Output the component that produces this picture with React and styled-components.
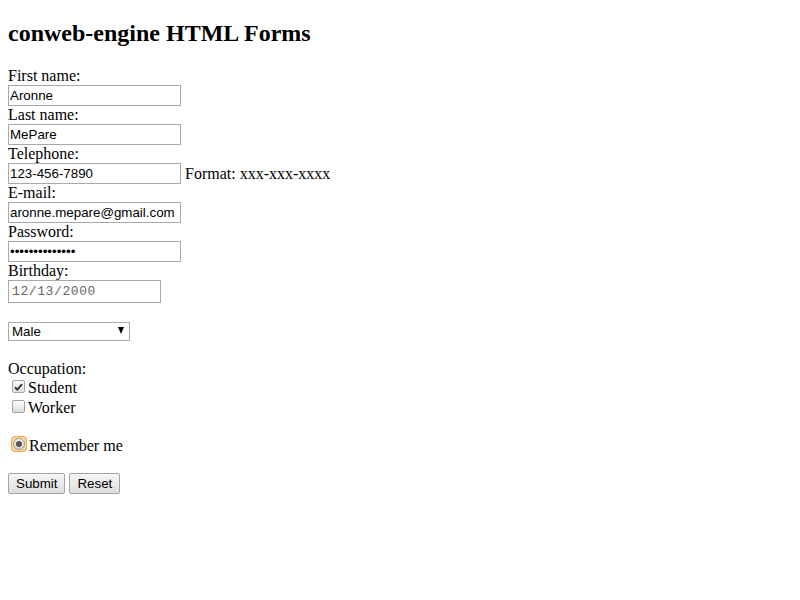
import React from 'react';
import styled, { createGlobalStyle } from 'styled-components';

const GlobalStyle = createGlobalStyle`
  body {
    margin: 0;
    background: #fff;
    color: #000;
    font-family: "Liberation Serif", "Times New Roman", serif;
    font-size: 16px;
  }
`;

const Page = styled.form`
  padding: 8px;
`;

const Title = styled.h2`
  margin: 12px 0 20px;
  font-size: 24px;
  line-height: 27px;
  font-weight: 700;
`;

const Label = styled.div`
  height: 18px;
  line-height: 18px;
  margin-top: ${(p) => p.$gap || 0}px;
`;

const FieldRow = styled.div`
  display: flex;
  align-items: center;
  gap: 4px;
  margin-top: ${(p) => p.$gap || 0}px;
`;

const TextInput = styled.input`
  box-sizing: border-box;
  display: block;
  width: ${(p) => p.$width || 173}px;
  height: ${(p) => p.$height || 21}px;
  margin: 0;
  padding: ${(p) => (p.$mono ? '1px 3px' : '1px 1px')};
  border: 1px solid #a9a9a9;
  border-radius: 0;
  background: #fff;
  color: ${(p) => (p.$muted ? '#666' : '#000')};
  font-family: ${(p) => (p.$mono ? '"Liberation Mono", monospace' : '"Liberation Sans", Arial, sans-serif')};
  font-size: ${(p) => (p.$mono ? 13 : 13.33)}px;
  letter-spacing: ${(p) => (p.$mono ? 0.6 : 0)}px;
  outline: none;
`;

const Hint = styled.span`
  font-size: 16px;
  line-height: 18px;
`;

const SelectWrap = styled.div`
  position: relative;
  width: 122px;
  margin-top: ${(p) => p.$gap || 0}px;
`;

const Select = styled.select`
  box-sizing: border-box;
  display: block;
  width: 122px;
  height: 19px;
  margin: 0;
  padding: 0 0 0 3px;
  border: 1px solid #a9a9a9;
  border-radius: 0;
  background: #fff;
  appearance: none;
  font-family: "Liberation Sans", Arial, sans-serif;
  font-size: 13.33px;
  color: #000;
  outline: none;
`;

const Arrow = styled.span`
  position: absolute;
  right: 6px;
  top: 5px;
  width: 0;
  height: 0;
  border-left: 3.5px solid transparent;
  border-right: 3.5px solid transparent;
  border-top: 7px solid #000;
  pointer-events: none;
`;

const CheckRow = styled.label`
  display: flex;
  align-items: flex-start;
  height: 20px;
  line-height: 20px;
  margin-top: ${(p) => p.$gap || 0}px;
`;

const Box = styled.span`
  box-sizing: border-box;
  display: inline-flex;
  align-items: center;
  justify-content: center;
  width: 13px;
  height: 13px;
  margin: 2px 3px 0 4px;
  border: 1px solid #a3a3a3;
  border-radius: 2px;
  background: linear-gradient(#fbfbfb, #dedede);
`;

const RadioRing = styled.span`
  box-sizing: border-box;
  display: inline-flex;
  align-items: center;
  justify-content: center;
  width: 16px;
  height: 16px;
  margin: 0 2px 0 3px;
  border: 1px solid #e9a64c;
  border-radius: 4px;
  background: #fbd89a;
`;

const RadioDot = styled.span`
  box-sizing: border-box;
  display: flex;
  align-items: center;
  justify-content: center;
  width: 12px;
  height: 12px;
  border: 1px solid #9a9a9a;
  border-radius: 50%;
  background: linear-gradient(#f4f4f4, #d6d6d6);

  &::after {
    content: '';
    width: 6px;
    height: 6px;
    border-radius: 50%;
    background: #555;
  }
`;

const Buttons = styled.div`
  display: flex;
  gap: 4px;
  margin-top: 17px;
`;

const Button = styled.button`
  box-sizing: border-box;
  height: 21px;
  margin: 0;
  padding: 0 7px;
  border: 1px solid #a3a3a3;
  border-radius: 2px;
  background: linear-gradient(#f6f6f6, #dddddd);
  font-family: "Liberation Sans", Arial, sans-serif;
  font-size: 13.33px;
  color: #000;
`;

function Check({ checked }) {
  return (
    <Box>
      {checked && (
        <svg width="9" height="8" viewBox="0 0 9 8">
          <path d="M1 4.2 L3.4 6.6 L8 1.2" fill="none" stroke="#333" strokeWidth="2" />
        </svg>
      )}
    </Box>
  );
}

const fields = [
  { label: 'First name:', value: 'Aronne' },
  { label: 'Last name:', value: 'MePare' },
  { label: 'Telephone:', value: '123-456-7890', hint: 'Format: xxx-xxx-xxxx' },
  { label: 'E-mail:', value: 'aronne.mepare@gmail.com' },
  { label: 'Password:', value: 'aronnemepare12', type: 'password' },
];

export default function App() {
  return (
    <>
      <GlobalStyle />
      <Page onSubmit={(e) => e.preventDefault()}>
        <Title>conweb-engine HTML Forms</Title>
        {fields.map((f) => (
          <React.Fragment key={f.label}>
            <Label>{f.label}</Label>
            <FieldRow>
              <TextInput type={f.type || 'text'} defaultValue={f.value} />
              {f.hint && <Hint>{f.hint}</Hint>}
            </FieldRow>
          </React.Fragment>
        ))}
        <Label>Birthday:</Label>
        <FieldRow>
          <TextInput $width={153} $height={23} $mono $muted readOnly defaultValue="12/13/2000" />
        </FieldRow>
        <SelectWrap $gap={19}>
          <Select defaultValue="male">
            <option value="male">Male</option>
            <option value="female">Female</option>
          </Select>
          <Arrow />
        </SelectWrap>
        <Label $gap={19}>Occupation:</Label>
        <CheckRow>
          <Check checked />
          Student
        </CheckRow>
        <CheckRow>
          <Check />
          Worker
        </CheckRow>
        <CheckRow $gap={18}>
          <RadioRing>
            <RadioDot />
          </RadioRing>
          Remember me
        </CheckRow>
        <Buttons>
          <Button type="submit">Submit</Button>
          <Button type="reset">Reset</Button>
        </Buttons>
      </Page>
    </>
  );
}
